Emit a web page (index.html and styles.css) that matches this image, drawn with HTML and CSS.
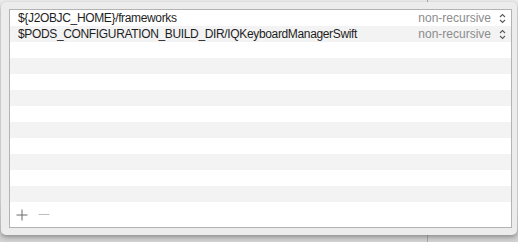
FILE: index.html
```html
<!DOCTYPE html>
<html lang="en">
<head>
    <meta charset="UTF-8">
    <title>Framework Search Paths</title>
    <link rel="stylesheet" href="styles.css">
</head>
<body>

<section class="sheet">
<div class="table">
<ul class="rows">
    <li class="row">
        <span class="path">${J2OBJC_HOME}/frameworks</span>
        <span class="mode">non-recursive</span>
        <svg class="stepper" width="7" height="11" viewBox="0 0 7 11"><path d="M1 4 L3.5 1.5 L6 4 M1 7 L3.5 9.5 L6 7" fill="none" stroke="#5a5a5a" stroke-width="1.1"/></svg>
    </li>
    <li class="row">
        <span class="path">$PODS_CONFIGURATION_BUILD_DIR/IQKeyboardManagerSwift</span>
        <span class="mode">non-recursive</span>
        <svg class="stepper" width="7" height="11" viewBox="0 0 7 11"><path d="M1 4 L3.5 1.5 L6 4 M1 7 L3.5 9.5 L6 7" fill="none" stroke="#5a5a5a" stroke-width="1.1"/></svg>
    </li>
    <li class="row"></li>
    <li class="row"></li>
    <li class="row"></li>
    <li class="row"></li>
    <li class="row"></li>
    <li class="row"></li>
    <li class="row"></li>
    <li class="row"></li>
    <li class="row"></li>
    <li class="row"></li>
</ul>
<div class="actions">
    <button class="add" title="Add">
        <svg width="12" height="12" viewBox="0 0 12 12"><path d="M6 0.5 V11.5 M0.5 6 H11.5" stroke="#6b6b6b" stroke-width="1"/></svg>
    </button>
    <button class="remove" title="Remove">
        <svg width="12" height="12" viewBox="0 0 12 12"><path d="M0.5 5.5 H11.5" stroke="#bdbdbd" stroke-width="1"/></svg>
    </button>
</div>
</div>
</section>

</body>
</html>
```
FILE: styles.css
```css
:root{
    --text-color: #1e1e1e;
    --muted: #8c8c8c;
    --stripe: #f3f3f3;
}

*{
padding: 0;
margin: 0;
box-sizing: border-box;
font-family: 'Liberation Sans', Arial, sans-serif;
}

body{
width: 518px;
height: 242px;
overflow: hidden;
background:
    linear-gradient(to right, transparent 427px, #a9a9a9 427px, #a9a9a9 428px, transparent 428px),
    linear-gradient(to bottom, #ececec 0, #ececec 200px, #d2d2d2 236px);
}

.sheet{
margin: 2px 1px 0 1px;
width: 516px;
height: 233px;
padding: 7px 5px 0 8px;
background: #ececec;
border-radius: 5px;
box-shadow: 0 2px 5px rgba(0,0,0,0.35);
}

.table{
width: 503px;
height: 219px;
border: 1px solid #b3b3b3;
background: #fff;
display: flex;
flex-direction: column;
}

.rows{
list-style: none;
}

.row{
height: 16px;
display: flex;
align-items: center;
padding: 0 5px 0 8px;
font-size: 12px;
color: var(--text-color);
}

.row:nth-child(even){
background: var(--stripe);
}

.path{
flex: 1;
white-space: nowrap;
letter-spacing: -0.35px;
}

.mode{
color: var(--muted);
margin-right: 8px;
}

.stepper{
display: block;
}

.actions{
flex: 1;
display: flex;
align-items: flex-end;
gap: 10px;
padding: 0 0 6px 6px;
}

.actions button{
all: unset;
width: 12px;
height: 12px;
display: block;
cursor: pointer;
}

.actions svg{
display: block;
}
```
